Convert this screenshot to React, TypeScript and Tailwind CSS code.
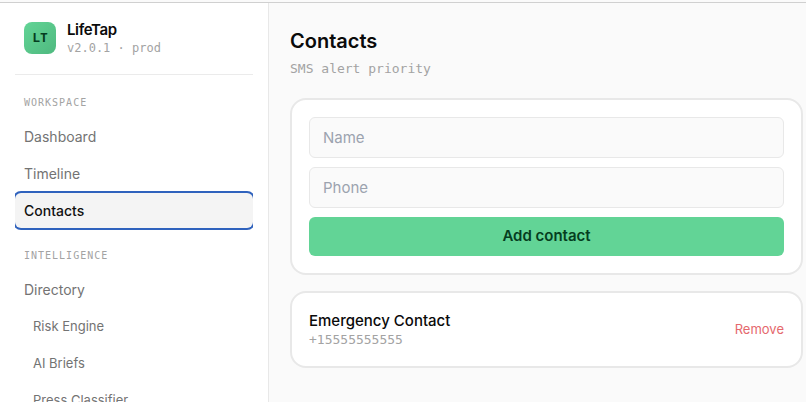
import { useState } from 'react';

const mono = "font-['DejaVu_Sans_Mono','Liberation_Mono',monospace]";

type NavItem = { label: string; nested?: boolean };
type NavGroup = { title: string; items: NavItem[] };

const groups: NavGroup[] = [
  {
    title: 'WORKSPACE',
    items: [{ label: 'Dashboard' }, { label: 'Timeline' }, { label: 'Contacts' }],
  },
  {
    title: 'INTELLIGENCE',
    items: [
      { label: 'Directory' },
      { label: 'Risk Engine', nested: true },
      { label: 'AI Briefs', nested: true },
      { label: 'Press Classifier', nested: true },
    ],
  },
];

function NavLink({ label, nested, active }: NavItem & { active: boolean }) {
  const size = nested ? 'pl-[18px] text-[13px]' : 'pl-[9px] text-[14px]';
  const tone = active
    ? 'bg-[#f4f4f4] font-medium text-[#111111] ring-2 ring-[#2f62bd]'
    : 'text-[#737373]';
  return (
    <a
      href="#"
      aria-current={active ? 'page' : undefined}
      className={`flex h-[35px] items-center rounded-md ${size} ${tone}`}
    >
      {label}
    </a>
  );
}

function Sidebar() {
  return (
    <aside className="flex w-[269px] shrink-0 flex-col border-r border-[#e8e8e8] bg-white px-[15px]">
      <div className="flex items-center gap-[11px] border-b border-[#ebebeb] pt-4 pb-[17px] pl-[9px]">
        <div
          className={`flex size-8 items-center justify-center rounded-lg bg-linear-to-br from-[#62d496] to-[#4fb97f] text-[13px] font-bold text-[#053d20] ${mono}`}
        >
          LT
        </div>
        <div className="pt-[2px]">
          <div className="text-[15px] leading-[18px] font-semibold tracking-tight text-[#0a0a0a]">LifeTap</div>
          <div className={`text-[12px] leading-[18px] text-[#a3a3a3] ${mono}`}>v2.0.1 · prod</div>
        </div>
      </div>
      <nav className="min-h-0 flex-1 overflow-hidden pt-5">
        {groups.map((group) => (
          <section key={group.title} className="mb-5">
            <h2 className={`mb-2 pl-[9px] text-[10px] leading-[16px] tracking-widest text-[#a3a3a3] ${mono}`}>
              {group.title}
            </h2>
            <div className="flex flex-col gap-[2px]">
              {group.items.map((item) => (
                <NavLink key={item.label} {...item} active={item.label === 'Contacts'} />
              ))}
            </div>
          </section>
        ))}
      </nav>
    </aside>
  );
}

function Field({ label, type }: { label: string; type: string }) {
  const [value, setValue] = useState('');
  return (
    <input
      aria-label={label}
      type={type}
      placeholder={label}
      value={value}
      onChange={(e) => setValue(e.target.value)}
      className="h-[41px] w-full rounded-md border border-[#e8e8e8] bg-[#fafafa] px-[13px] text-[15px] text-[#111111] placeholder:text-[#9ca3af]"
    />
  );
}

export default function App() {
  return (
    <div className="flex h-screen flex-col overflow-hidden bg-white font-['Inter',sans-serif]">
      <header className="h-[3px] shrink-0 border-b border-[#d0d0d0] bg-[#fafafa]" />
      <div className="flex min-h-0 flex-1 bg-[#fafafa]">
        <Sidebar />
        <main className="min-w-0 flex-1 pt-6 pr-[3px] pl-[21px]">
          <h1 className="text-[20px] leading-[28px] font-semibold text-[#0a0a0a]">Contacts</h1>
          <p className={`mt-1 text-[13px] leading-[20px] text-[#a3a3a3] ${mono}`}>SMS alert priority</p>

          <form
            onSubmit={(e) => e.preventDefault()}
            className="mt-[19px] flex flex-col gap-[9px] rounded-2xl border-2 border-[#e8e8e8] bg-white p-[17px]"
          >
            <Field label="Name" type="text" />
            <Field label="Phone" type="tel" />
            <button
              type="submit"
              className="h-[39px] w-full rounded-md bg-[#62d496] text-[15px] font-semibold text-[#053d20]"
            >
              Add contact
            </button>
          </form>

          <div className="mt-4 flex h-[77px] items-center justify-between rounded-2xl border-2 border-[#e8e8e8] bg-white px-[17px]">
            <div>
              <div className="text-[15px] leading-[20px] font-medium text-[#0a0a0a]">Emergency Contact</div>
              <div className={`text-[13px] leading-[18px] text-[#a3a3a3] ${mono}`}>+15555555555</div>
            </div>
            <button type="button" className="text-[13px] text-[#e5686d]">
              Remove
            </button>
          </div>
        </main>
      </div>
    </div>
  );
}
